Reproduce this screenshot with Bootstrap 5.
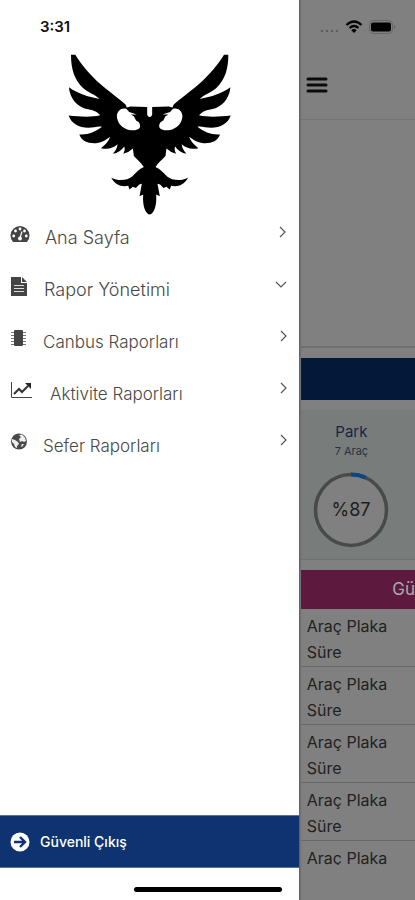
<!DOCTYPE html>
<html lang="tr">
<head>
<meta charset="utf-8">
<meta name="viewport" content="width=device-width, initial-scale=1">
<title>Ana Sayfa</title>
<link href="https://cdn.jsdelivr.net/npm/bootstrap@5.3.0/dist/css/bootstrap.min.css" rel="stylesheet">
<style>
body { font-family: Inter, "Liberation Sans", sans-serif; background: #fff; }
svg { display: block; flex: none; }
.side-drawer { width: 72%; background: #fff; z-index: 1; box-shadow: 0 0 2px 1px #555; }
.clock-row { height: 54px; padding: 16px 40px 0; font-size: 15px; line-height: 22px; font-weight: 600; color: #111; }
.eagle { width: 163px; height: 161px; }
.menu-item { height: 52px; padding: 8px 10px 0; gap: 15px; color: #484848; background: none; border: 0; width: 100%; text-align: left; font-size: 17px; line-height: 24px; font-weight: 300; }
.menu-item svg { margin-top: 2px; }
.menu-item .label-text { margin-top: 3px; }
.menu-item.top-level { font-size: 18px; }
.logout { height: 53px; padding: 0 10px; gap: 10px; background: #0e3370; color: #fff; font-size: 14px; font-weight: 500; border: 0; border-top: 1px solid #60708f; border-bottom: 1px solid #60708f; margin-bottom: 32px; }
.behind { background: #808080; min-width: 0; height: 100vh; color: #1d1d1d; padding-left: 2px; }
.status-row { height: 54px; padding: 0 19px 0 21px; gap: 5px; }
.top-bar { height: 66px; padding: 0 5px 4px; border-bottom: 1px solid #747474; }
.map-area { height: 228px; border-bottom: 2px solid #6f6f6f; }
.navy-bar { height: 42px; background: #04193a; margin-top: 10px; }
.park-card { height: 150px; margin-top: 10px; padding: 12px 13px 0 0; background: #787d7c; border-bottom: 1px solid #6d7171; }
.park-title { font-size: 15px; line-height: 20px; color: #172448; }
.park-sub { font-size: 11px; line-height: 18px; color: #293142; }
.ring { width: 76px; height: 76px; margin-top: 12px; }
.pink-bar { height: 39px; margin-top: 10px; background: #5d1a3e; color: #aaa; font-size: 17px; }
.plate-row { height: 58px; flex: none; padding: 4px 6px 0; font-size: 16px; line-height: 26px; border-bottom: 1px solid #686868; font-weight: 400; color: #222; }
.plate-list { height: 256px; }
.home-bar { bottom: 8px; width: 148px; height: 5px; background: #000; z-index: 2; }
</style>
<script src="https://cdn.jsdelivr.net/npm/bootstrap@5.3.0/dist/js/bootstrap.bundle.min.js"></script>
</head>
<body>
<div class="d-flex vh-100 overflow-hidden position-relative">
  <aside class="side-drawer d-flex flex-column flex-shrink-0">
    <div class="clock-row">3:31</div>
    <svg class="eagle mx-auto" viewBox="24 28 490 484" role="img" aria-label="Logo">
      <defs>
        <path id="half" fill-rule="evenodd" d="M33 30H46C62 58 92 92 122 119C150 143 180 164 197 180L201 189L212 186L262 187V211Q264 218 271 218V510H266C253 500 248 478 250 450L239 456L246 418L238 420L228 431L219 427L209 435L205 424C187 428 168 424 154 400C176 411 202 408 217 396C230 384 237 374 252 368C243 354 231 345 222 335L219 312Q208 323 190 328Q197 315 193 306Q180 325 159 328Q172 313 173 299Q154 317 123 311Q144 296 151 277C139 285 129 295 108 296C82 297 66 290 58 270C84 272 105 263 126 247C115 244 101 250 85 250C57 250 33 236 26 213C58 216 92 219 121 212C107 195 89 196 70 190C43 180 28 151 27 128C51 146 84 157 119 163C105 149 87 146 69 130C43 105 33 73 33 30ZM200 193C184 188 172 199 171 214C172 234 182 247 200 254C214 260 236 258 240 249C243 240 237 231 229 229L222 215L213 210L231 210L208 202Z"/>
      </defs>
      <use href="#half"/>
      <use href="#half" transform="translate(539 0) scale(-1 1)"/>
    </svg>
    <nav class="d-flex flex-column">
      <button class="menu-item top-level d-flex align-items-start" type="button">
        <svg width="20" height="18" viewBox="0 0 20 18"><path fill="#444" d="M3 17A9.500 9.500 0 1 1 17 17Z"/><g fill="#fff"><circle cx="3.700" cy="11" r="1.400"/><circle cx="5.500" cy="6" r="1.400"/><circle cx="10" cy="4" r="1.400"/><circle cx="14.500" cy="6" r="1.400"/><circle cx="16.300" cy="11" r="1.400"/><circle cx="10" cy="13.500" r="2"/></g><path d="M12 6.500L10 13" stroke="#fff" stroke-width="1.200"/></svg>
        <span class="label-text">Ana Sayfa</span>
        <svg class="ms-auto" width="12" height="14" viewBox="0 0 12 14" fill="none" stroke="#555" stroke-width="1.200"><path d="M3 2L8 7L3 12"/></svg>
      </button>
      <button class="menu-item top-level d-flex align-items-start" type="button">
        <svg width="19" height="19" viewBox="0 0 19 19"><path fill="#444" d="M1 0H11V6H17V19H1ZM12 0L17 5H12Z"/><path stroke="#ddd" d="M4 8.500H14M4 11.500H14M4 14.500H14"/></svg>
        <span class="label-text">Rapor Yönetimi</span>
        <svg class="ms-auto" width="14" height="14" viewBox="0 0 14 14" fill="none" stroke="#555" stroke-width="1.200"><path d="M1 5L6 10L11 5"/></svg>
      </button>
      <button class="menu-item d-flex align-items-start" type="button">
        <svg width="18" height="18" viewBox="0 0 18 18"><rect x="4" y="1" width="9" height="16" rx="1" fill="#444"/><path stroke="#777" d="M1 3.500H16M1 6.500H16M1 9.500H16M1 12.500H16M1 15.500H16" stroke-dasharray="3 9"/></svg>
        <span class="label-text">Canbus Raporları</span>
        <svg class="ms-auto" width="12" height="14" viewBox="0 0 12 14" fill="none" stroke="#555" stroke-width="1.200"><path d="M4 2L9 7L4 12"/></svg>
      </button>
      <button class="menu-item d-flex align-items-start" type="button">
        <svg width="25" height="18" viewBox="0 0 25 18" fill="none"><path stroke="#444" d="M1.500 1V16.500H22"/><path stroke="#333" stroke-width="2" d="M4 13L9 8L12 11L18 5"/><path fill="#222" d="M15 2H21V8Z"/></svg>
        <span class="label-text">Aktivite Raporları</span>
        <svg class="ms-auto" width="12" height="14" viewBox="0 0 12 14" fill="none" stroke="#555" stroke-width="1.200"><path d="M4 2L9 7L4 12"/></svg>
      </button>
      <button class="menu-item d-flex align-items-start" type="button">
        <svg width="18" height="18" viewBox="0 0 18 18"><circle cx="9" cy="8.500" r="8" fill="#4a4a4a"/><path fill="#eee" d="M9 2L12 1.500L15 4.500L16 8L14 9L12 8L10 9L9 6L11 4ZM2 6L5 7L8 9L9 11L7 13L7 15L5 14L4 11L2 9ZM12 11L14 11L12 14L11 13Z"/></svg>
        <span class="label-text">Sefer Raporları</span>
        <svg class="ms-auto" width="12" height="14" viewBox="0 0 12 14" fill="none" stroke="#555" stroke-width="1.200"><path d="M4 2L9 7L4 12"/></svg>
      </button>
    </nav>
    <button class="logout d-flex align-items-center mt-auto" type="button">
      <svg width="20" height="20" viewBox="0 0 20 20" fill="none"><circle cx="10" cy="10" r="9.500" fill="#fff"/><path d="M4 10H15M10 5L15 10L10 15" stroke="#0e3370" stroke-width="2.400"/></svg>
      <span>Güvenli Çıkış</span>
    </button>
  </aside>
  <main class="behind flex-grow-1 overflow-hidden">
    <div class="status-row d-flex align-items-center justify-content-end">
      <svg width="20" height="14" viewBox="0 0 20 14" fill="#5e5e5e"><circle cx="2" cy="11" r="1.200"/><circle cx="7" cy="11" r="1.200"/><circle cx="12" cy="11" r="1.200"/><circle cx="17" cy="11" r="1.200"/></svg>
      <svg width="18" height="14" viewBox="0 0 18 14" fill="none" stroke="#000" stroke-width="2.200"><path d="M1.500 5Q9-2 16.500 5M4.500 8Q9 4 13.500 8"/><path fill="#000" stroke="none" d="M6.300 10.200Q9 8 11.700 10.200L9 13Z"/></svg>
      <svg width="28" height="14" viewBox="0 0 28 14"><rect x="1.500" y=".5" width="23" height="13" rx="4" fill="none" stroke="#666"/><rect x="3" y="2.500" width="20" height="9" rx="2"/><path d="M26 4.500Q29 7 26 9.500Z" fill="#666"/></svg>
    </div>
    <div class="top-bar d-flex align-items-center">
      <button class="btn p-0 border-0" type="button" aria-label="Menü"><svg width="22" height="16" viewBox="0 0 22 16" stroke="#0b0b0b" stroke-width="3" stroke-linecap="round"><path d="M2 2H20M2 8H20M2 14H20"/></svg></button>
    </div>
    <div class="map-area"></div>
    <div class="navy-bar"></div>
    <section class="park-card d-flex flex-column align-items-center">
      <div class="park-title">Park</div>
      <div class="park-sub">7 Araç</div>
      <svg class="ring" viewBox="0 0 76 76"><circle cx="38" cy="38" r="35.500" fill="#808080" stroke="#474a49" stroke-width="3.500"/><path d="M38 2.500A35.500 35.500 0 0 1 53 5.800" fill="none" stroke="#0d4581" stroke-width="4"/><text x="38" y="44" text-anchor="middle" font-size="18" fill="#1d1d1d">%87</text></svg>
    </section>
    <div class="pink-bar d-flex align-items-center justify-content-end">Gü</div>
    <div class="plate-list d-flex flex-column overflow-hidden">
      <div class="plate-row">Araç Plaka<br>Süre</div>
      <div class="plate-row">Araç Plaka<br>Süre</div>
      <div class="plate-row">Araç Plaka<br>Süre</div>
      <div class="plate-row">Araç Plaka<br>Süre</div>
      <div class="plate-row">Araç Plaka</div>
    </div>
  </main>
  <div class="home-bar position-absolute start-50 translate-middle-x rounded-pill"></div>
</div>
</body>
</html>
